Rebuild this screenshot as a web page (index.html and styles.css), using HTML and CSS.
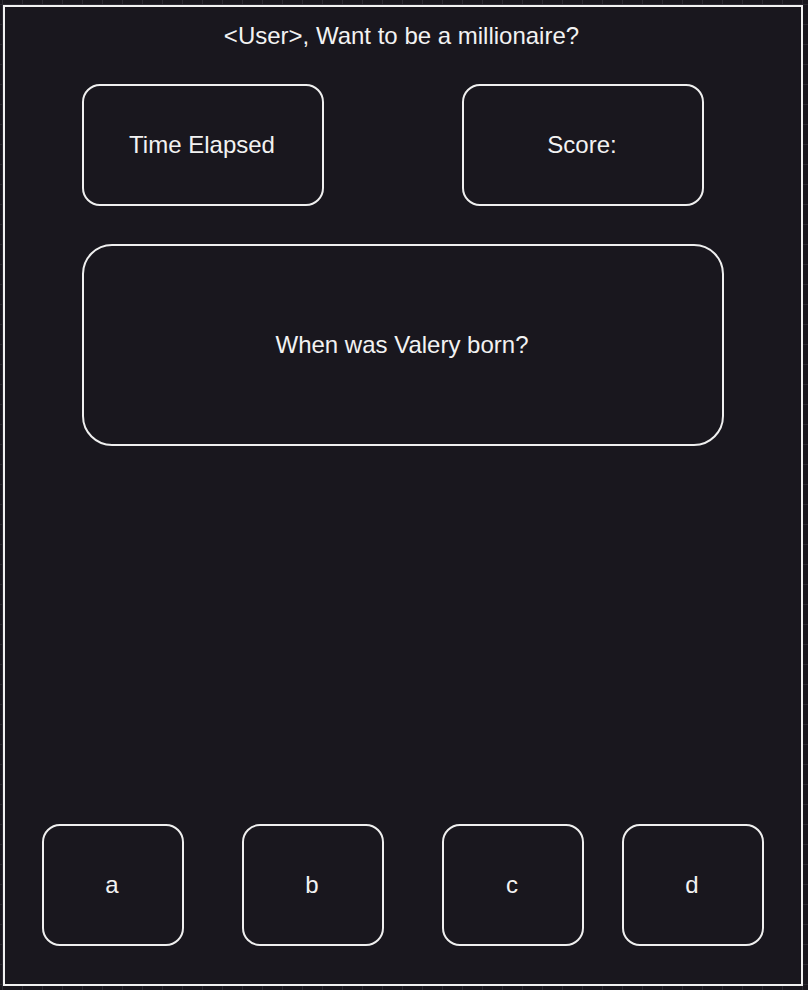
FILE: index.html
```html
<!DOCTYPE html>
<html lang="en">
<head>
<meta charset="utf-8">
<title>Want to be a millionaire?</title>
<link rel="stylesheet" href="styles.css">
</head>
<body>
<main class="frame">
  <h1 class="title">&lt;User&gt;, Want to be a millionaire?</h1>
  <section class="stats">
    <div class="box stat">Time Elapsed</div>
    <div class="box stat">Score:</div>
  </section>
  <section class="box question">When was Valery born?</section>
  <section class="answers">
    <button class="box answer">a</button>
    <button class="box answer">b</button>
    <button class="box answer">c</button>
    <button class="box answer answer-d">d</button>
  </section>
</main>
</body>
</html>
```
FILE: styles.css
```css
html, body {
  margin: 0;
  padding: 0;
}

body {
  width: 808px;
  height: 990px;
  overflow: hidden;
  background-color: #19171e;
  background-image:
    repeating-linear-gradient(to right, transparent 0, transparent 2px, #2c2a32 2px, #2c2a32 3px, transparent 3px, transparent 20px),
    repeating-linear-gradient(to bottom, transparent 0, transparent 4px, #2c2a32 4px, #2c2a32 5px, transparent 5px, transparent 20px);
  font-family: "Liberation Sans", Arial, Helvetica, sans-serif;
  color: #f2f2f2;
}

.frame {
  box-sizing: border-box;
  margin: 5px 0 0 3px;
  width: 800px;
  height: 981px;
  border: 2px solid #f2f2f2;
  background: #19171e;
  display: flex;
  flex-direction: column;
}

.title {
  margin: 15px 3px 0 0;
  height: 28px;
  line-height: 28px;
  font-size: 24px;
  font-weight: normal;
  text-align: center;
}

.box {
  box-sizing: border-box;
  border: 2px solid #efefef;
  border-radius: 18px;
  background: transparent;
  color: #f2f2f2;
  font-family: inherit;
  font-size: 24px;
  display: flex;
  align-items: center;
  justify-content: center;
  padding: 0 2px 0 0;
}

.stats {
  display: flex;
  gap: 138px;
  margin-top: 34px;
  padding-left: 77px;
}

.stat {
  width: 242px;
  height: 122px;
}

.question {
  margin: 38px 0 0 77px;
  width: 642px;
  height: 202px;
  border-radius: 30px;
}

.answers {
  display: flex;
  gap: 58px;
  margin-top: auto;
  margin-bottom: 38px;
  padding-left: 37px;
}

.answer {
  width: 142px;
  height: 122px;
}

.answer-d {
  margin-left: -20px;
}
```
